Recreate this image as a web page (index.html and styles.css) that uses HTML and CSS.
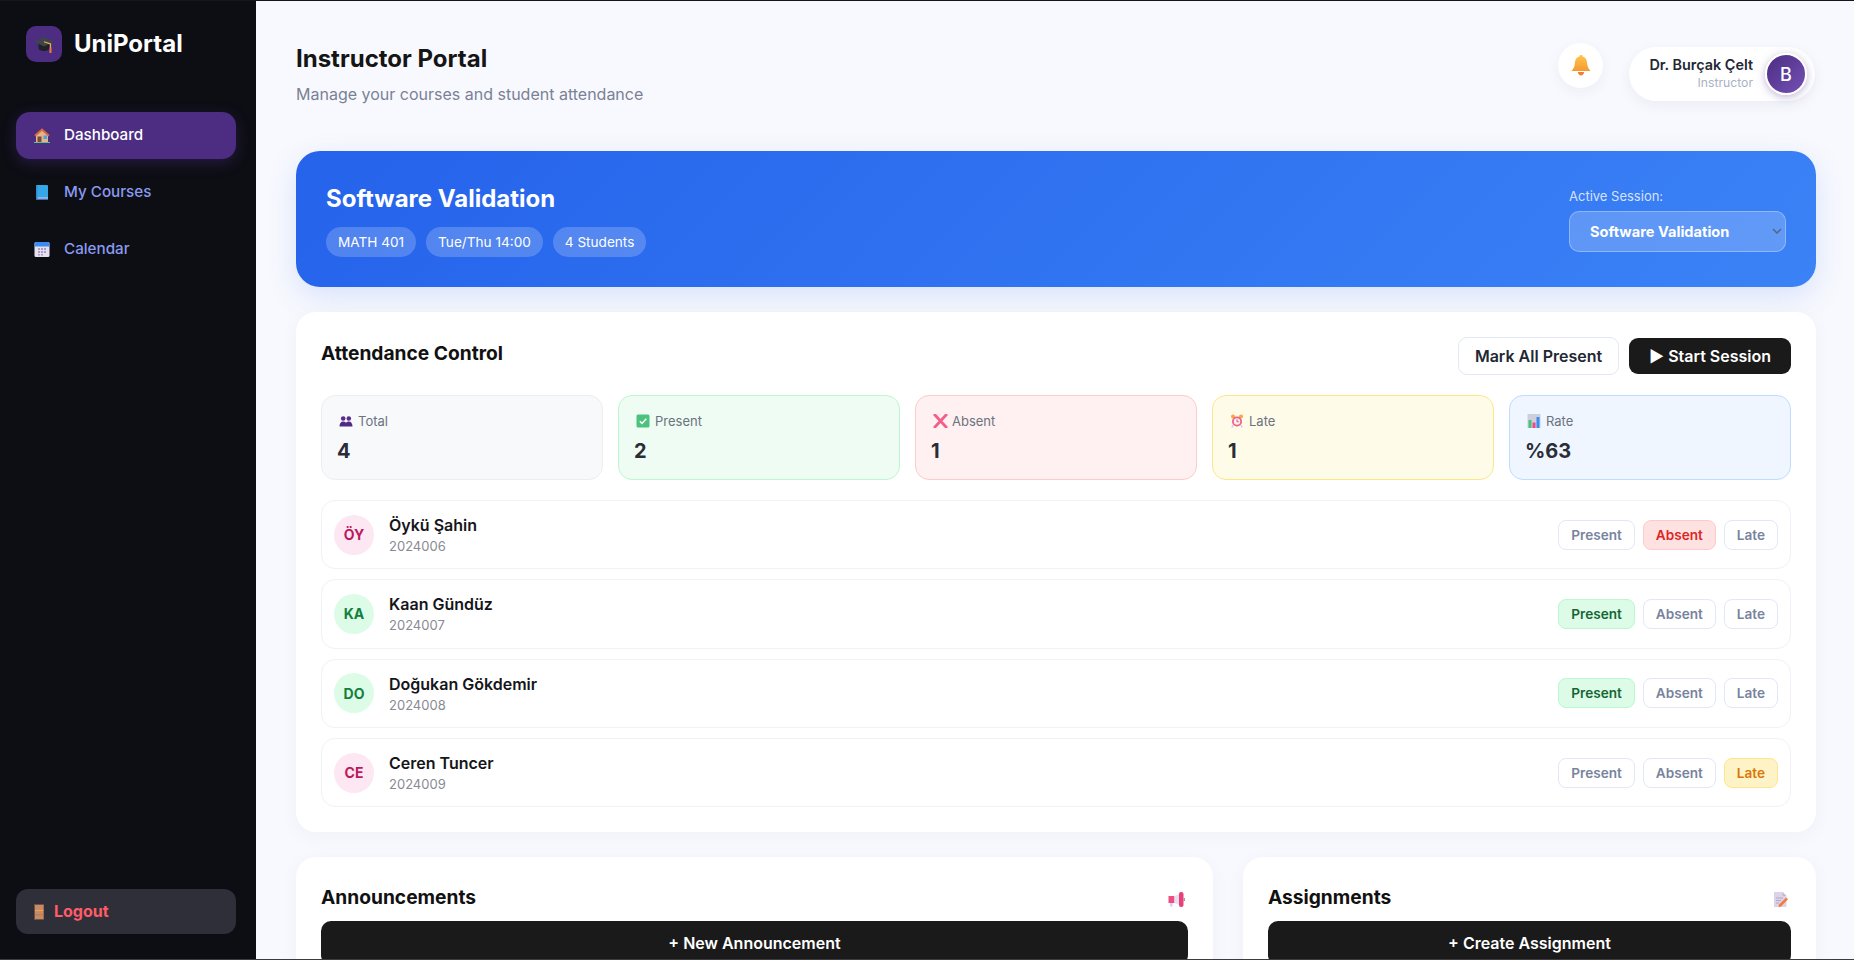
FILE: index.html
```html
<!DOCTYPE html>
<html lang="en">
<head>
    <meta charset="UTF-8">
    <meta name="viewport" content="width=device-width, initial-scale=1.0">
    <title>UniPortal - Instructor</title>
    <link rel="stylesheet" href="styles.css">
</head>
<body>
    <div class="app">
        <aside class="sidebar">
            <div class="brand">
                <div class="brand-icon">
                    <svg width="20" height="20" viewBox="0 0 20 20">
                        <path d="M4.500 9v5.200c0 1.500 2.600 2.800 5.500 2.800s5.500-1.300 5.500-2.800V9z" fill="#1f2127"/>
                        <polygon points="10,3 20,7.800 10,12.600 0,7.800" fill="#3f444c"/>
                        <polyline points="10,7.800 16.500,10 16.500,14" fill="none" stroke="#f5b23e" stroke-width="1.200"/>
                        <rect x="15.500" y="13.500" width="2" height="5.500" fill="#f0793c"/>
                    </svg>
                </div>
                <span class="brand-name">UniPortal</span>
            </div>
            <nav class="nav">
                <a class="nav-item active">
                    <span class="nav-icon">
                        <svg width="16" height="15" viewBox="0 0 16 15">
                            <polygon points="2,7 8,2 14,7 14,14 2,14" fill="#e6b48c"/>
                            <polyline points="1,7.800 8,1.500 15,7.800" fill="none" stroke="#d9683c" stroke-width="2"/>
                            <rect x="3.500" y="8.500" width="4" height="5.500" fill="#7a4c38"/>
                            <rect x="9.500" y="7.500" width="3.500" height="3.500" fill="#3fa8ea"/>
                            <rect x="0" y="14" width="16" height="1" fill="#62c08a"/>
                        </svg>
                    </span>
                    <span class="nav-text">Dashboard</span>
                </a>
                <a class="nav-item">
                    <span class="nav-icon">
                        <svg width="16" height="15" viewBox="0 0 16 15">
                            <rect x="2" y="0" width="12" height="15" rx="1" fill="#35a7e8"/>
                            <rect x="2" y="12.500" width="12" height="2.500" fill="#3f6fb8"/>
                            <rect x="3.500" y="12.500" width="10.500" height="1" fill="#d7e6f5"/>
                            <rect x="2" y="0" width="1.500" height="12.500" fill="#2c8fd0"/>
                        </svg>
                    </span>
                    <span class="nav-text">My Courses</span>
                </a>
                <a class="nav-item">
                    <span class="nav-icon">
                        <svg width="16" height="15" viewBox="0 0 16 15">
                            <rect x="0.500" y="0" width="15" height="15" rx="1.500" fill="#e7e0f1"/>
                            <path d="M.5 4.500V1.500A1.500 1.500 0 0 1 2 0h12a1.500 1.500 0 0 1 1.500 1.500v3z" fill="#3b8bf0"/>
                            <path d="M4 6h2v2H4zM7 6h2v2H7zM10 6h2v2h-2zM4 9h2v2H4zM7 9h2v2H7zM10 9h2v2h-2zM4 12h2v1.500H4zM7 12h2v1.500H7z" fill="#a99cc6"/>
                        </svg>
                    </span>
                    <span class="nav-text">Calendar</span>
                </a>
            </nav>
            <a class="logout">
                <span class="logout-icon">
                    <svg width="10" height="16" viewBox="0 0 10 16">
                        <rect width="10" height="16" fill="#6e5246"/>
                        <rect x="1" y="1" width="8.500" height="14" fill="#c98b63"/>
                        <rect x="1" y="6" width="8.500" height="1" fill="#eba35a"/>
                        <rect x="1" y="10.500" width="8.500" height="0.800" fill="#ae7450"/>
                    </svg>
                </span>
                <span class="logout-text">Logout</span>
            </a>
        </aside>

        <main class="main">
            <header class="header">
                <div>
                    <h1 class="page-title">Instructor Portal</h1>
                    <p class="page-sub">Manage your courses and student attendance</p>
                </div>
                <div class="header-right">
                    <div class="bell">
                        <svg width="20" height="21" viewBox="0 0 20 21">
                            <defs>
                                <linearGradient id="bellFill" x1="0" y1="0" x2="0" y2="1">
                                    <stop offset="0" stop-color="#ffc64e"/>
                                    <stop offset="1" stop-color="#f6992f"/>
                                </linearGradient>
                            </defs>
                            <path d="M10 0c1 0 1.700.7 1.700 1.600C15 2.500 16 5.500 16.200 9c.2 3 1.800 5 3.300 7H.5C2 14 3.600 12 3.800 9 4 5.500 5 2.500 8.300 1.600 8.300.7 9 0 10 0z" fill="url(#bellFill)"/>
                            <path d="M7 17h6c0 2-1.300 3.500-3 3.500S7 19 7 17z" fill="#ee7f3a"/>
                        </svg>
                    </div>
                    <div class="profile">
                        <div class="profile-text">
                            <div class="profile-name">Dr. Burçak Çelt</div>
                            <div class="profile-role">Instructor</div>
                        </div>
                        <div class="profile-avatar">B</div>
                    </div>
                </div>
            </header>

            <section class="hero">
                <div>
                    <h2 class="hero-title">Software Validation</h2>
                    <div class="hero-chips">
                        <span class="chip">MATH 401</span>
                        <span class="chip">Tue/Thu 14:00</span>
                        <span class="chip">4 Students</span>
                    </div>
                </div>
                <div class="session">
                    <label class="session-label" for="session">Active Session:</label>
                    <select class="session-select" id="session">
                        <option>Software Validation</option>
                    </select>
                </div>
            </section>

            <section class="card attendance">
                <div class="card-head">
                    <h3 class="card-title">Attendance Control</h3>
                    <div class="card-actions">
                        <button class="btn btn-outline">Mark All Present</button>
                        <button class="btn btn-dark">▶ Start Session</button>
                    </div>
                </div>

                <div class="stats">
                    <div class="stat stat-total">
                        <div class="stat-label">
                            <span class="stat-icon">
                                <svg width="14" height="14" viewBox="0 0 14 14">
                                    <circle cx="4.200" cy="4.500" r="2.300" fill="#5a2d8c"/>
                                    <circle cx="9.800" cy="4.500" r="2.300" fill="#5a2d8c"/>
                                    <path d="M.5 12.500c0-3 1.300-5 3.700-5s2.800 1.500 2.800 1.500.4-1.500 2.800-1.500 3.700 2 3.700 5z" fill="#4f2a82"/>
                                </svg>
                            </span>Total
                        </div>
                        <div class="stat-value">4</div>
                    </div>
                    <div class="stat stat-present">
                        <div class="stat-label">
                            <span class="stat-icon">
                                <svg width="14" height="14" viewBox="0 0 14 14">
                                    <rect x="0.500" y="0.500" width="13" height="13" rx="1.500" fill="#4cc27f"/>
                                    <polyline points="3.800,7.200 6,9.400 10.300,4.800" fill="none" stroke="#fff" stroke-width="1.500"/>
                                </svg>
                            </span>Present
                        </div>
                        <div class="stat-value">2</div>
                    </div>
                    <div class="stat stat-absent">
                        <div class="stat-label">
                            <span class="stat-icon">
                                <svg width="15" height="14" viewBox="0 0 15 14">
                                    <path d="M2 1l5.500 6M13 1L7.500 7M2 13l5.500-6M13 13L7.500 7" stroke="#f2608a" stroke-width="2.800" stroke-linecap="square" fill="none"/>
                                </svg>
                            </span>Absent
                        </div>
                        <div class="stat-value">1</div>
                    </div>
                    <div class="stat stat-late">
                        <div class="stat-label">
                            <span class="stat-icon">
                                <svg width="14" height="14" viewBox="0 0 14 14">
                                    <circle cx="3" cy="2.500" r="2" fill="#f5a83f"/>
                                    <circle cx="11" cy="2.500" r="2" fill="#f5a83f"/>
                                    <path d="M3 11l-1 2.500M11 11l1 2.500" stroke="#d8c9e8" stroke-width="1.500"/>
                                    <circle cx="7" cy="7.500" r="5" fill="#f2608a"/>
                                    <circle cx="7" cy="7.500" r="3.200" fill="#fdf1ee"/>
                                    <path d="M7 5.300v2.500h1.800" fill="none" stroke="#d8486e" stroke-width="0.900"/>
                                </svg>
                            </span>Late
                        </div>
                        <div class="stat-value">1</div>
                    </div>
                    <div class="stat stat-rate">
                        <div class="stat-label">
                            <span class="stat-icon">
                                <svg width="14" height="14" viewBox="0 0 14 14">
                                    <rect x="0.500" y="0" width="13" height="14" rx="1" fill="#cfcfdc"/>
                                    <rect x="1.500" y="6" width="3" height="8" fill="#4cc27f"/>
                                    <rect x="5.500" y="8.500" width="3" height="5.500" fill="#f0488a"/>
                                    <rect x="9.500" y="3" width="3" height="11" fill="#3b8bf0"/>
                                </svg>
                            </span>Rate
                        </div>
                        <div class="stat-value">%63</div>
                    </div>
                </div>

                <div class="students">
                    <div class="student">
                        <div class="student-avatar pink">ÖY</div>
                        <div class="student-info">
                            <div class="student-name">Öykü Şahin</div>
                            <div class="student-id">2024006</div>
                        </div>
                        <div class="marks">
                            <button class="mark">Present</button>
                            <button class="mark mark-absent">Absent</button>
                            <button class="mark">Late</button>
                        </div>
                    </div>
                    <div class="student">
                        <div class="student-avatar green">KA</div>
                        <div class="student-info">
                            <div class="student-name">Kaan Gündüz</div>
                            <div class="student-id">2024007</div>
                        </div>
                        <div class="marks">
                            <button class="mark mark-present">Present</button>
                            <button class="mark">Absent</button>
                            <button class="mark">Late</button>
                        </div>
                    </div>
                    <div class="student">
                        <div class="student-avatar green">DO</div>
                        <div class="student-info">
                            <div class="student-name">Doğukan Gökdemir</div>
                            <div class="student-id">2024008</div>
                        </div>
                        <div class="marks">
                            <button class="mark mark-present">Present</button>
                            <button class="mark">Absent</button>
                            <button class="mark">Late</button>
                        </div>
                    </div>
                    <div class="student">
                        <div class="student-avatar pink">CE</div>
                        <div class="student-info">
                            <div class="student-name">Ceren Tuncer</div>
                            <div class="student-id">2024009</div>
                        </div>
                        <div class="marks">
                            <button class="mark">Present</button>
                            <button class="mark">Absent</button>
                            <button class="mark mark-late">Late</button>
                        </div>
                    </div>
                </div>
            </section>

            <div class="bottom-grid">
                <section class="card">
                    <div class="panel-head">
                        <h3 class="card-title">Announcements</h3>
                        <svg class="panel-icon" width="17" height="15" viewBox="0 0 17 15">
                            <rect x="2" y="10" width="2.500" height="4.500" fill="#d9d0ea"/>
                            <rect x="0.500" y="4" width="6" height="7" fill="#ef4f80"/>
                            <polygon points="6.500,4 11.500,2 11.500,13 6.500,11" fill="#e6e0f0"/>
                            <rect x="11" y="0" width="4.500" height="15" rx="2" fill="#ea3f78"/>
                            <rect x="15.500" y="6" width="1.500" height="3" fill="#9a9aa8"/>
                        </svg>
                    </div>
                    <button class="btn-wide">+ New Announcement</button>
                </section>
                <section class="card">
                    <div class="panel-head">
                        <h3 class="card-title">Assignments</h3>
                        <svg class="panel-icon" width="14" height="15" viewBox="0 0 14 15">
                            <polygon points="0,0 8.500,0 12.500,4 12.500,15 0,15" fill="#ddd3e8"/>
                            <polygon points="8.500,0 12.500,4 8.500,4" fill="#c4b8d4"/>
                            <path d="M2 6h7M2 8.500h5M2 11h3" stroke="#b3a7c4" stroke-width="1"/>
                            <polygon points="12.200,5.500 14,7.200 7,14.500 4.500,15 5,12.500" fill="#f57b3d"/>
                        </svg>
                    </div>
                    <button class="btn-wide">+ Create Assignment</button>
                </section>
            </div>
        </main>
    </div>
</body>
</html>
```

FILE: styles.css
```css
/* Global Styles */
* {
    margin: 0;
    padding: 0;
    box-sizing: border-box;
}

body {
    font-family: "Inter", sans-serif;
    background-color: #f8f9fe;
    color: #111;
    height: 100vh;
    overflow: hidden;
}

svg {
    display: block;
}

.app {
    display: grid;
    grid-template-columns: 256px 1fr;
    height: 100vh;
    overflow: hidden;
    border-top: 1px solid #16161a;
    border-bottom: 1px solid #3c3c3e;
}

/* Sidebar */
.sidebar {
    display: flex;
    flex-direction: column;
    background-color: #0d0e14;
    padding: 25px 20px 25px 16px;
}

.brand {
    display: flex;
    align-items: center;
    gap: 12px;
    padding-left: 10px;
    margin-bottom: 50px;
}

.brand-icon {
    display: flex;
    align-items: center;
    justify-content: center;
    width: 36px;
    height: 36px;
    border-radius: 10px;
    background-color: #4c2d82;
}

.brand-name {
    font-size: 24px;
    font-weight: 700;
    color: #fff;
    padding-bottom: 1px;
}

.nav {
    display: flex;
    flex-direction: column;
    gap: 10px;
}

.nav-item {
    display: flex;
    align-items: center;
    height: 47px;
    padding-left: 18px;
    border-radius: 14px;
    font-size: 15.2px;
    font-weight: 500;
    color: #8a9bf0;
}

.nav-item.active {
    background-color: #4c2d82;
    color: #fff;
    box-shadow: 0 4px 14px rgba(76, 45, 130, 0.4);
}

.nav-icon {
    width: 30px;
}

.nav-text {
    padding-bottom: 2px;
}

.logout {
    display: flex;
    align-items: center;
    height: 45px;
    margin-top: auto;
    padding-left: 18px;
    border-radius: 12px;
    background-color: #2f2f3a;
    font-size: 16px;
    font-weight: 700;
    color: #ff5c66;
}

.logout-icon {
    width: 20px;
}

.logout-text {
    padding-bottom: 1px;
}

/* Main */
.main {
    padding: 40px 38px 0 40px;
    overflow: hidden;
}

.header {
    display: flex;
    justify-content: space-between;
    margin-bottom: 45px;
    padding-right: 1px;
}

.page-title {
    font-size: 24px;
    line-height: 36px;
    font-weight: 700;
    color: #151515;
}

.page-sub {
    margin-top: 5px;
    font-size: 16px;
    line-height: 24px;
    color: #7a8196;
}

.header-right {
    display: flex;
    align-items: flex-start;
    gap: 26px;
    padding-top: 2px;
}

.bell {
    display: flex;
    align-items: center;
    justify-content: center;
    width: 45px;
    height: 45px;
    border-radius: 50%;
    background-color: #fff;
    box-shadow: 0 4px 14px rgba(30, 40, 90, 0.05);
}

.profile {
    display: flex;
    align-items: center;
    gap: 12px;
    height: 54px;
    margin-top: 4px;
    padding: 0 8px 0 20px;
    border-radius: 27px;
    background-color: #fff;
    box-shadow: 0 4px 14px rgba(30, 40, 90, 0.06);
}

.profile-text {
    padding-bottom: 2px;
    text-align: right;
}

.profile-name {
    font-size: 14.4px;
    line-height: 18px;
    font-weight: 600;
    color: #222733;
}

.profile-role {
    font-size: 12.2px;
    line-height: 17px;
    color: #a9b1c4;
}

.profile-avatar {
    display: flex;
    align-items: center;
    justify-content: center;
    width: 42px;
    height: 42px;
    border: 2px solid #fff;
    border-radius: 50%;
    background: linear-gradient(135deg, #4c2d82, #7351b5);
    color: #fff;
    font-size: 18px;
    font-weight: 500;
    box-shadow: 0 2px 8px rgba(76, 45, 130, 0.35);
}

/* Course hero */
.hero {
    display: flex;
    align-items: center;
    justify-content: space-between;
    padding: 30px;
    border-radius: 24px;
    background: linear-gradient(135deg, #2563eb, #3b82f6);
    color: #fff;
    box-shadow: 0 10px 30px rgba(37, 99, 235, 0.15);
    margin-bottom: 25px;
}

.hero-title {
    font-size: 24px;
    line-height: 36px;
    font-weight: 700;
}

.hero-chips {
    display: flex;
    gap: 10px;
    margin-top: 10px;
}

.chip {
    padding: 0 12px;
    border-radius: 15px;
    background-color: rgba(255, 255, 255, 0.2);
    font-size: 13.6px;
    line-height: 30px;
}

.session {
    display: flex;
    flex-direction: column;
    gap: 6px;
}

.session-label {
    font-size: 13px;
    line-height: 18px;
    color: rgba(255, 255, 255, 0.8);
}

.session-select {
    appearance: none;
    width: 217px;
    height: 41px;
    padding: 2px 20px 0;
    border: 1px solid rgba(255, 255, 255, 0.3);
    border-radius: 10px;
    background-color: rgba(255, 255, 255, 0.2);
    background-image: url("data:image/svg+xml,%3Csvg xmlns='http://www.w3.org/2000/svg' width='10' height='6'%3E%3Cpath d='M1 1l4 4 4-4' fill='none' stroke='%23566480' stroke-width='1.500'/%3E%3C/svg%3E");
    background-repeat: no-repeat;
    background-position: right 3px center;
    color: #fff;
    font-family: inherit;
    font-size: 14.6px;
    font-weight: 700;
}

/* Cards */
.card {
    padding: 25px;
    border-radius: 20px;
    background-color: #fff;
    box-shadow: 0 4px 20px rgba(30, 40, 90, 0.04);
}

.attendance {
    margin-bottom: 25px;
}

.card-head {
    display: flex;
    align-items: flex-start;
    justify-content: space-between;
    margin-bottom: 20px;
}

.card-head .card-title {
    padding-top: 1px;
}

.card-title {
    font-size: 19.2px;
    line-height: 30px;
    font-weight: 700;
    color: #111;
}

.card-actions {
    display: flex;
    align-items: center;
    gap: 10px;
}

.btn {
    font-family: inherit;
    font-size: 16px;
    font-weight: 600;
    border-radius: 9px;
    cursor: pointer;
}

.btn-outline {
    height: 38px;
    padding: 0 16px;
    border: 1px solid #e2e8f5;
    background-color: #fff;
    color: #222733;
}

.btn-dark {
    height: 36px;
    padding: 0 20px;
    border: none;
    background-color: #1a1a1a;
    color: #fff;
}

/* Stats */
.stats {
    display: grid;
    grid-template-columns: repeat(5, 1fr);
    gap: 15px;
    margin-bottom: 20px;
}

.stat {
    height: 85px;
    padding: 16px 15px;
    border: 1px solid #eceef2;
    border-radius: 14px;
    background-color: #f8f9fb;
}

.stat-present {
    background-color: #effcf3;
    border-color: #bbf7d0;
}

.stat-absent {
    background-color: #fff1f1;
    border-color: #fecaca;
}

.stat-late {
    background-color: #fffbe9;
    border-color: #fde68a;
}

.stat-rate {
    background-color: #eff6ff;
    border-color: #bfdbfe;
}

.stat-label {
    display: flex;
    align-items: center;
    font-size: 13px;
    line-height: 18px;
    color: #6b7280;
}

.stat-icon {
    width: 21px;
    padding-left: 2px;
}

.stat-value {
    margin-top: 8px;
    font-size: 20px;
    line-height: 26px;
    font-weight: 700;
    color: #2a2d36;
}

/* Student rows */
.students {
    display: flex;
    flex-direction: column;
    gap: 10px;
}

.student {
    display: flex;
    align-items: center;
    gap: 15px;
    padding: 12px;
    border: 1px solid #f0f2f7;
    border-radius: 14px;
}

.student-avatar {
    display: flex;
    align-items: center;
    justify-content: center;
    width: 40px;
    height: 40px;
    border-radius: 50%;
    font-size: 14px;
    font-weight: 700;
}

.student-avatar.pink {
    background-color: #fce7f3;
    color: #be185d;
}

.student-avatar.green {
    background-color: #dcfce7;
    color: #15803d;
}

.student-info {
    flex: 1;
}

.student-name {
    font-size: 16px;
    line-height: 24px;
    font-weight: 600;
    color: #15151a;
}

.student-id {
    font-size: 13px;
    line-height: 19.3px;
    color: #8a8a94;
}

.marks {
    display: flex;
    gap: 8px;
}

.mark {
    height: 30px;
    padding: 0 12px;
    border: 1.5px solid #e2e8f5;
    border-radius: 8px;
    background-color: #fff;
    color: #78839e;
    font-family: inherit;
    font-size: 13.6px;
    font-weight: 600;
    cursor: pointer;
}

.mark-present {
    background-color: #dcfce7;
    border-color: #bbf7d0;
    color: #166534;
}

.mark-absent {
    background-color: #fee2e2;
    border-color: #fecaca;
    color: #dc2626;
}

.mark-late {
    background-color: #fef3c7;
    border-color: #fde68a;
    color: #d97706;
}

/* Bottom panels */
.bottom-grid {
    display: grid;
    grid-template-columns: 1.6fr 1fr;
    gap: 30px;
}

.panel-head {
    display: flex;
    align-items: center;
    justify-content: space-between;
    margin-bottom: 9px;
}

.panel-icon {
    margin: 5px 3px 0 0;
}

.btn-wide {
    display: block;
    width: 100%;
    height: 44px;
    border: none;
    border-radius: 10px;
    background-color: #1a1a1a;
    color: #fff;
    font-family: inherit;
    font-size: 16px;
    font-weight: 600;
    cursor: pointer;
}
```
